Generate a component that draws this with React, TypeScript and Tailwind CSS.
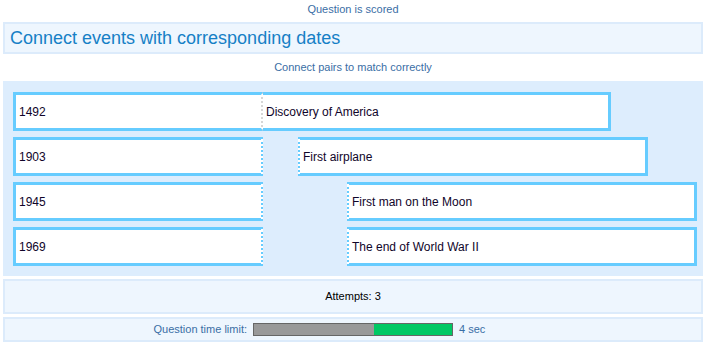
const pairs = [
  { year: '1492', event: 'Discovery of America', offset: 'ml-0', joined: true },
  { year: '1903', event: 'First airplane', offset: 'ml-[35px]', joined: false },
  { year: '1945', event: 'First man on the Moon', offset: 'ml-[84px]', joined: false },
  { year: '1969', event: 'The end of World War II', offset: 'ml-[84px]', joined: false },
];

export default function App() {
  return (
    <div className="w-[710px] h-[349px] bg-white font-['Liberation_Sans',Arial,sans-serif]">
      <div className="w-[700px] ml-[3px]">
        {/* Scored notice */}
        <div className="h-[22px] pt-[2px] text-center text-[11px] leading-[14px] text-[#3a6ea5]">
          Question is scored
        </div>

        {/* Title */}
        <div className="h-[32px] flex items-center px-[5px] bg-[#eef6fe] border-2 border-[#dcebfb] text-[18px] text-[#1680c6]">
          Connect events with corresponding dates
        </div>

        {/* Instruction */}
        <div className="h-[27px] flex items-center justify-center text-[11px] text-[#3a6ea5]">
          Connect pairs to match correctly
        </div>

        {/* Matching area */}
        <div className="bg-[#ddedfd] pl-[10px] pt-[11px] pb-[10px] flex flex-col gap-[6px]">
          {pairs.map((p) => (
            <div key={p.year} className="flex">
              <div
                className={`w-[250px] h-[39px] flex items-center pl-[3px] text-[12px] text-[#10052a] bg-white border-[3px] border-[#66ccff] border-r-2 ${
                  p.joined ? 'border-r-[#d6d6d6]' : 'border-r-[#66ccff]'
                }`}
                style={{ borderRightStyle: 'dotted', borderTopStyle: 'solid', borderBottomStyle: 'solid', borderLeftStyle: 'solid' }}
              >
                {p.year}
              </div>
              <div
                className={`${p.offset} ${p.joined ? 'w-[348px] border-l-0' : 'w-[350px] border-l-2'} h-[39px] flex items-center pl-[3px] text-[12px] text-[#10052a] bg-white border-[3px] border-[#66ccff]`}
                style={{ borderLeftStyle: 'dotted', borderTopStyle: 'solid', borderBottomStyle: 'solid', borderRightStyle: 'solid' }}
              >
                {p.event}
              </div>
            </div>
          ))}
        </div>

        {/* Attempts */}
        <div className="mt-[3px] h-[35px] flex items-center justify-center bg-[#eef6fe] border-2 border-[#dcebfb] text-[11px] text-black">
          Attempts: 3
        </div>

        {/* Time limit */}
        <div className="mt-[3px] h-[25px] grid grid-cols-[1fr_auto_1fr] items-center gap-[6px] bg-[#eef6fe] border-2 border-[#dcebfb] text-[11px] text-[#3a6ea5]">
          <span className="text-right">Question time limit:</span>
          <div className="w-[200px] h-[13px] border border-[#666666] bg-[#999999] flex">
            <div className="w-[120px]" />
            <div className="flex-1 bg-[#00c864]" />
          </div>
          <span>4 sec</span>
        </div>
      </div>
    </div>
  );
}
